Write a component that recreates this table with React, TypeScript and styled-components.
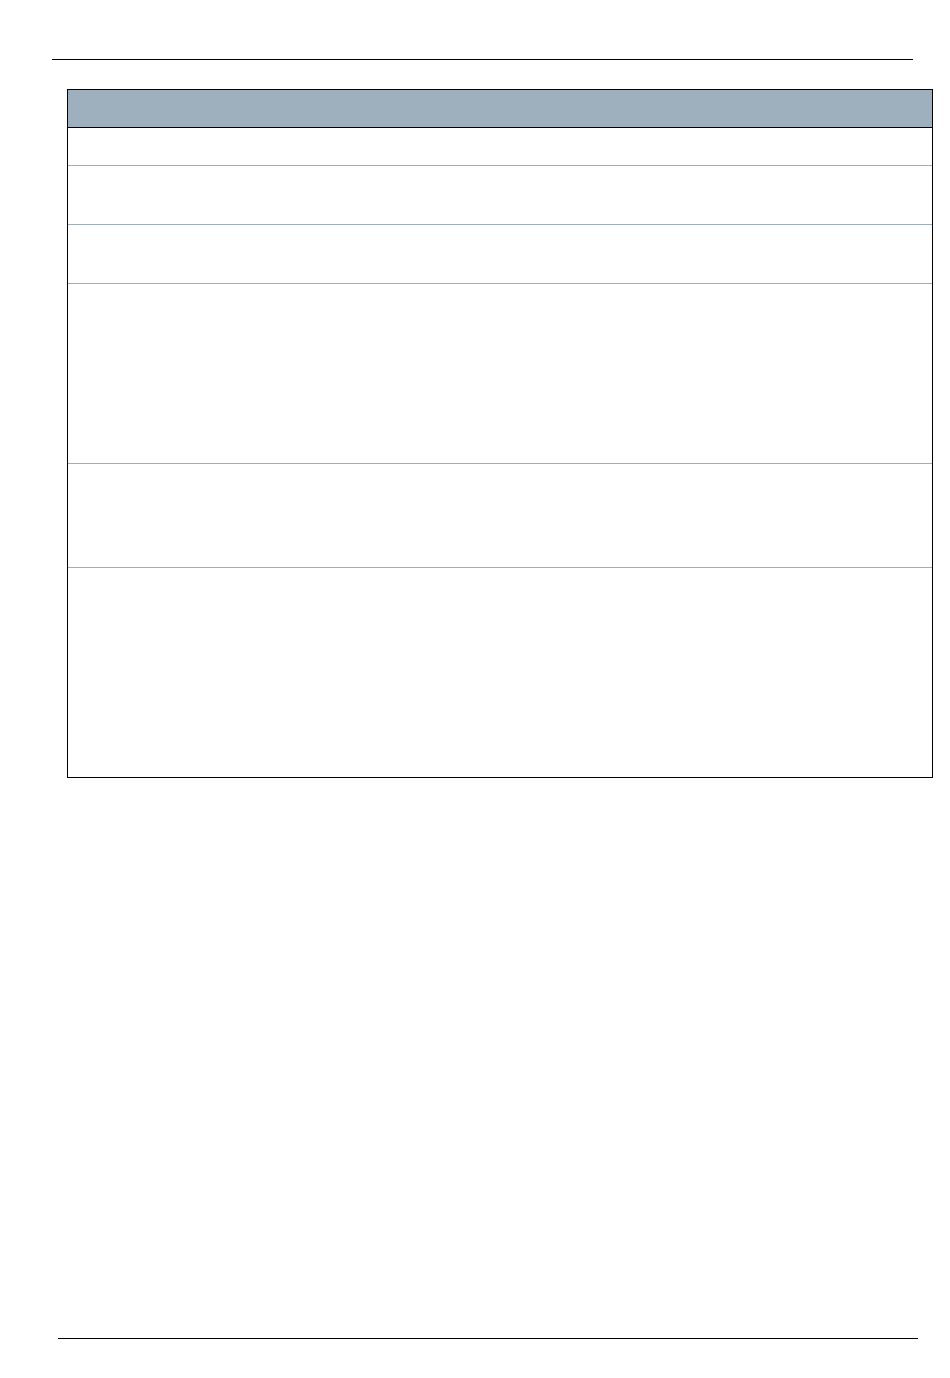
import React from 'react';
import styled, { createGlobalStyle } from 'styled-components';

const GlobalStyle = createGlobalStyle`
  html, body {
    margin: 0;
    padding: 0;
    background: #ffffff;
    font-family: 'Liberation Sans', Arial, sans-serif;
  }
`;

const rowHeights = [37, 58, 58, 179, 103, 209];

const App = () => {
  return (
    <>
      <GlobalStyle />
      <PageStyle>
        <HeaderRule />
        <Sheet>
          <SheetHead />
          {rowHeights.map((h, i) => (
            <SheetRow key={i} $height={h} $last={i === rowHeights.length - 1} />
          ))}
        </Sheet>
        <FooterRule />
      </PageStyle>
    </>
  );
};

const PageStyle = styled.div`
  min-height: 1378px;
  display: flex;
  flex-direction: column;
  box-sizing: border-box;
  padding-top: 59px;
  padding-bottom: 39px;
`;

const HeaderRule = styled.div`
  margin-left: 52px;
  width: 861px;
  border-top: 1px solid #000000;
`;

const Sheet = styled.div`
  margin-top: 29px;
  margin-left: 67px;
  width: 866px;
  box-sizing: border-box;
  border: 1px solid #000000;
  display: flex;
  flex-direction: column;
`;

const SheetHead = styled.div`
  height: 37px;
  background: #9eafbd;
  border-bottom: 1px solid #000000;
`;

const SheetRow = styled.div<{ $height: number; $last?: boolean }>`
  height: ${(p) => p.$height}px;
  border-bottom: ${(p) => (p.$last ? 'none' : '1px solid #9cadbb')};
`;

const FooterRule = styled.div`
  margin-top: auto;
  margin-left: 58px;
  width: 860px;
  border-top: 1px solid #000000;
`;

export default App;
